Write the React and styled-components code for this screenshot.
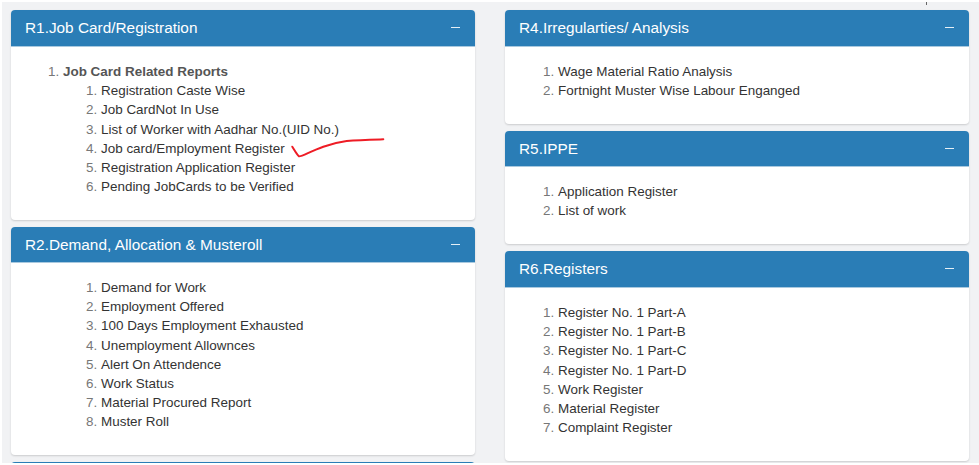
import React from "react";
import styled, { createGlobalStyle } from "styled-components";

const GlobalStyle = createGlobalStyle`
  html, body {
    margin: 0;
    padding: 0;
    background: #fff;
    overflow: hidden;
  }
  * {
    box-sizing: border-box;
  }
`;

const Page = styled.div`
  position: relative;
  margin: 2px 0 0 2px;
  height: 461px;
  overflow: hidden;
  padding: 8px 10px 0 9px;
  background: #f1f2f4;
  font-family: "Liberation Sans", Arial, sans-serif;
  font-size: 13.44px;
  line-height: 19.2px;
  color: #333;
`;

const Columns = styled.div`
  display: grid;
  grid-template-columns: 464px 464px;
  column-gap: 30px;
`;

const Column = styled.div`
  display: flex;
  flex-direction: column;
  gap: 7px;
`;

const Card = styled.section`
  position: relative;
  height: ${(props) => props.height}px;
  flex: none;
  background: #fff;
  border-radius: 4px;
  box-shadow: 0 1px 2px rgba(0, 0, 0, 0.16);
  overflow: hidden;
`;

const Header = styled.header`
  display: flex;
  align-items: flex-start;
  justify-content: space-between;
  height: ${(props) => props.height || 37}px;
  padding: 8px 15px 0 14px;
  background: #2a7db6;
  border-bottom: 1px solid #a9c9df;
  color: #fff;
`;

const Title = styled.h3`
  margin: 0;
  font-size: 15.36px;
  font-weight: 400;
`;

const Collapse = styled.span`
  display: block;
  width: 9px;
  height: 1px;
  margin-top: 9px;
  background: #e4eff6;
`;

const Body = styled.div`
  padding: 15px 0 0 ${(props) => props.indent}px;
`;

const List = styled.ol`
  margin: 0;
  padding: 0 0 0 ${(props) => props.indent || 0}px;

  li::marker {
    color: #777;
  }
`;

const Heading = styled.strong`
  color: #555;
`;

const Scribble = styled.svg`
  position: absolute;
  left: 268px;
  top: 120px;
  width: 110px;
  height: 30px;
  pointer-events: none;
`;

const Tick = styled.span`
  position: absolute;
  top: 0;
  left: 924px;
  width: 1px;
  height: 3px;
  background: #666;
`;

const Items = ({ items, indent }) => (
  <List indent={indent}>
    {items.map((item) => (
      <li key={item}>{item}</li>
    ))}
  </List>
);

const Panel = ({ title, height, headerHeight, indent, children }) => (
  <Card height={height}>
    <Header height={headerHeight}>
      <Title>{title}</Title>
      <Collapse />
    </Header>
    <Body indent={indent}>{children}</Body>
  </Card>
);

const App = () => (
  <>
    <GlobalStyle />
    <Page>
      <Columns>
        <Column>
          <Panel title="R1.Job Card/Registration" height={210} indent={52}>
            <List>
              <li>
                <Heading>Job Card Related Reports</Heading>
                <Items
                  indent={38}
                  items={[
                    "Registration Caste Wise",
                    "Job CardNot In Use",
                    "List of Worker with Aadhar No.(UID No.)",
                    "Job card/Employment Register",
                    "Registration Application Register",
                    "Pending JobCards to be Verified",
                  ]}
                />
              </li>
            </List>
            <Scribble viewBox="0 0 110 30" fill="none">
              <path
                d="M13.3 16.7 C15.5 20 17.5 24 20 26.3 C21.5 27.3 32 21 44.3 16.7 C52 14 60 12 67.7 11 C80 9.8 92 9.6 104.3 9.3"
                stroke="#ee1c25"
                strokeWidth="2"
                strokeLinecap="round"
                strokeLinejoin="round"
              />
            </Scribble>
          </Panel>
          <Panel title="R2.Demand, Allocation & Musteroll" height={228} headerHeight={36} indent={90}>
            <Items
              items={[
                "Demand for Work",
                "Employment Offered",
                "100 Days Employment Exhausted",
                "Unemployment Allownces",
                "Alert On Attendence",
                "Work Status",
                "Material Procured Report",
                "Muster Roll",
              ]}
            />
          </Panel>
          <Card height={36}>
            <Header />
          </Card>
        </Column>
        <Column>
          <Panel title="R4.Irregularties/ Analysis" height={114} indent={53}>
            <Items items={["Wage Material Ratio Analysis", "Fortnight Muster Wise Labour Enganged"]} />
          </Panel>
          <Panel title="R5.IPPE" height={113} headerHeight={36} indent={53}>
            <Items items={["Application Register", "List of work"]} />
          </Panel>
          <Panel title="R6.Registers" height={210} indent={53}>
            <Items
              items={[
                "Register No. 1 Part-A",
                "Register No. 1 Part-B",
                "Register No. 1 Part-C",
                "Register No. 1 Part-D",
                "Work Register",
                "Material Register",
                "Complaint Register",
              ]}
            />
          </Panel>
        </Column>
      </Columns>
      <Tick />
    </Page>
  </>
);

export default App;
